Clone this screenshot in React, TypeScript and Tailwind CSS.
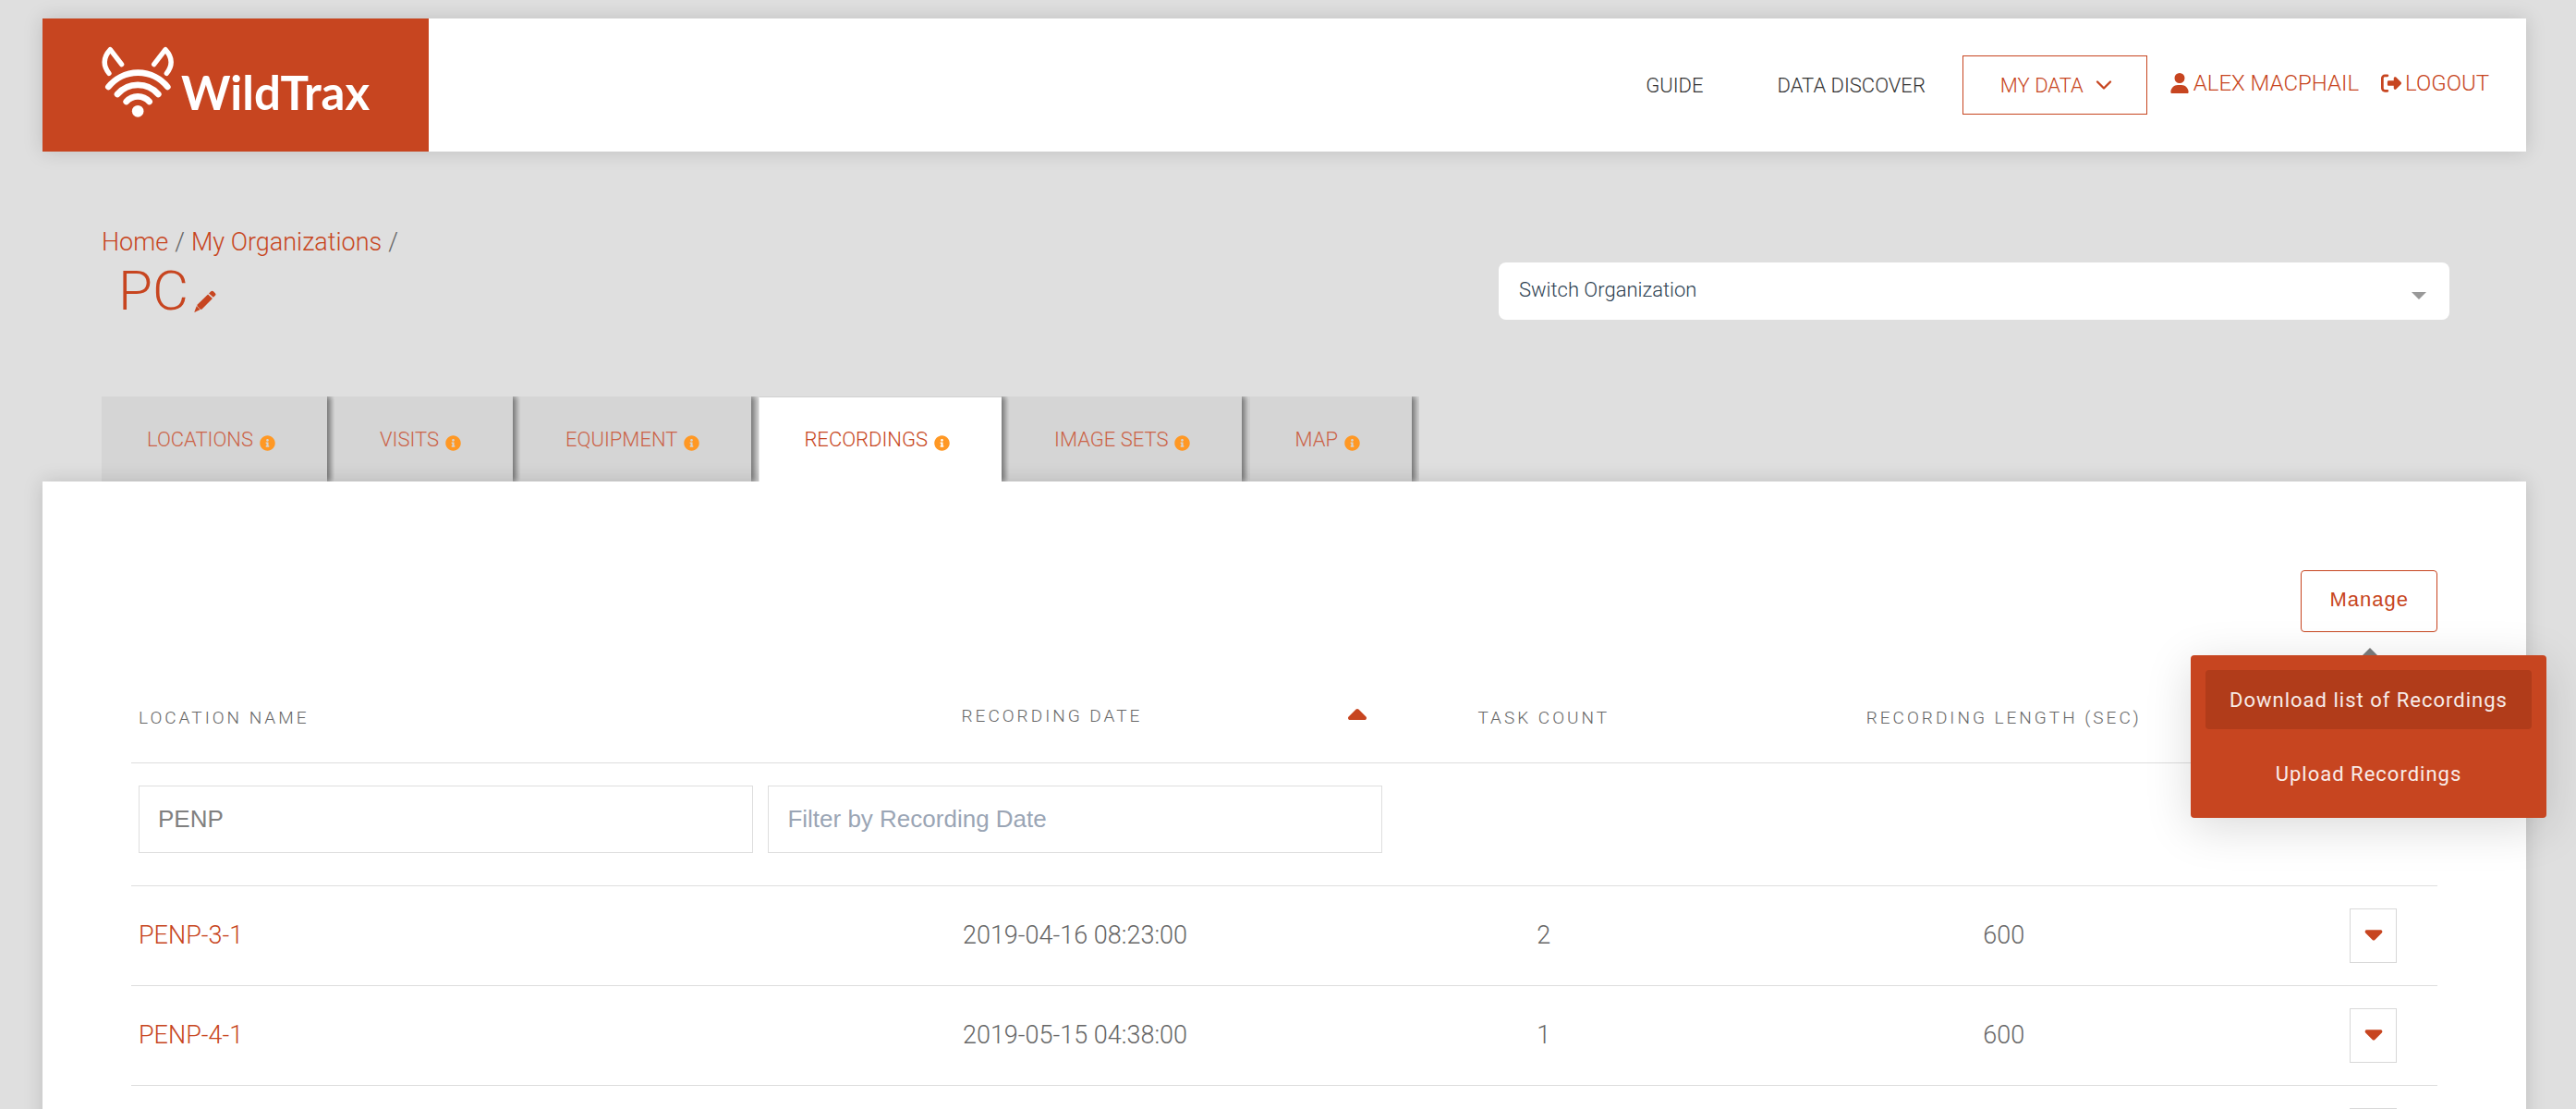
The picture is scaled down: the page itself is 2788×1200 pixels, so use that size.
import { useState } from "react";
import type { ReactNode } from "react";
import { FaUser, FaCaretUp, FaCaretDown, FaRightFromBracket } from "react-icons/fa6";
import { FaInfoCircle } from "react-icons/fa";
import { ChevronDown } from "lucide-react";

const tabs = ["LOCATIONS", "VISITS", "EQUIPMENT", "RECORDINGS", "IMAGE SETS", "MAP"];

const rows = [
  { name: "PENP-3-1", date: "2019-04-16 08:23:00", tasks: "2", length: "600" },
  { name: "PENP-4-1", date: "2019-05-15 04:38:00", tasks: "1", length: "600" },
  { name: "", date: "", tasks: "", length: "" },
];

function Logo() {
  return (
    <a href="#" aria-label="WildTrax" className="flex w-[418px] items-start bg-[#c74520] pt-[30px] pl-16 text-white">
      <svg viewBox="240 150 234 234" className="h-[78px] w-[78px] shrink-0" fill="none" stroke="currentColor" strokeLinecap="round" strokeLinejoin="round">
        <path d="M264 238C242 210 246 185 268 161L305 209" strokeWidth="16" />
        <path d="M451 238C473 210 469 185 447 161L410 209" strokeWidth="16" />
        <path d="M262 282A123 123 0 0 1 454 282" strokeWidth="20" />
        <path d="M291 306A88 88 0 0 1 424 306" strokeWidth="20" />
        <path d="M320 330A50 50 0 0 1 395 330" strokeWidth="20" />
        <circle cx="357.500" cy="361" r="19" fill="currentColor" stroke="none" />
      </svg>
      <span className="mt-5 ml-2 font-['Lato',sans-serif] text-[51px] leading-[60px] font-bold">WildTrax</span>
    </a>
  );
}

function Header() {
  return (
    <header className="flex h-36 bg-white shadow-[0_0_20px_rgba(0,0,0,0.15)]">
      <Logo />
      <nav className="ml-auto flex items-center pr-10 text-[22px] text-[#333]">
        <a href="#">GUIDE</a>
        <a href="#" className="ml-20">DATA DISCOVER</a>
        <button type="button" className="ml-10 flex h-16 items-center gap-2 border border-[#c74520] pr-8 pl-10 text-[#c74520]">
          MY DATA <ChevronDown className="size-7" strokeWidth={2} />
        </button>
        <a href="#" className="ml-6 flex items-center gap-1 pb-1 text-2xl text-[#c74520]">
          <FaUser className="size-[22px]" /> ALEX MACPHAIL
        </a>
        <a href="#" className="ml-6 flex items-center gap-1 pb-1 text-2xl text-[#c74520]">
          <FaRightFromBracket className="size-[22px]" /> LOGOUT
        </a>
      </nav>
    </header>
  );
}

function PencilIcon() {
  return (
    <svg viewBox="360 250 73 74" className="mb-3 size-6 text-[#c74520]" fill="currentColor">
      <path d="M409 261L416 254Q420 250 424 254L430 260Q434 264 430 268L424 274Z" />
      <path d="M406 264L421 278L386 313Q383 315 380 313L371 304Q369 301 371 298Z" />
      <path d="M368 303L380 315L360 324Z" />
    </svg>
  );
}

function Tab({ label, active, onSelect }: { label: string; active: boolean; onSelect: () => void }) {
  return (
    <button
      type="button"
      role="tab"
      aria-selected={active}
      onClick={onSelect}
      className={
        active
          ? "relative z-20 flex h-[92px] items-center gap-[7px] border-t border-[#d0d0d0] bg-white pr-14 pl-[49px] text-[#c74520] shadow-[3px_0_7px_1px_rgba(0,0,0,0.5)] [clip-path:inset(0_-8px_0_0)]"
          : "flex h-[92px] items-center gap-[7px] bg-[#d5d5d5] pr-14 pl-[49px] text-[#cb6347] shadow-[3px_0_7px_1px_rgba(0,0,0,0.5)] [clip-path:inset(0_-8px_0_0)]"
      }
    >
      {label}
      <FaInfoCircle className="mt-2 size-[17px] text-[#ff9824]" />
    </button>
  );
}

function Th({ children }: { children?: ReactNode }) {
  return <th className="h-24 px-2 text-center text-[19px] font-light tracking-[3px]">{children}</th>;
}

function ManageMenu() {
  return (
    <div className="relative flex justify-end">
      <button type="button" aria-haspopup="menu" className="h-[67px] rounded-[4px] border border-[#c74520] px-[30px] pb-1 font-['Liberation_Sans',sans-serif] text-[22px] font-normal tracking-[1px] text-[#c74520]">
        Manage
      </button>
      <div className="absolute top-[84px] right-[65px] z-10 h-2 w-4 bg-[#777] [clip-path:polygon(50%_0,100%_100%,0_100%)]" />
      <div role="menu" className="absolute top-[92px] right-[-118px] flex w-[385px] flex-col gap-4 rounded-[4px] bg-[#c74520] p-4 text-[22px] font-normal tracking-[1px] text-white/90 shadow-[0_10px_50px_rgba(0,0,0,0.15)]">
        <button type="button" role="menuitem" className="h-16 rounded-[4px] bg-[#b13c1a]">Download list of Recordings</button>
        <button type="button" role="menuitem" className="h-16 rounded-[4px]">Upload Recordings</button>
      </div>
    </div>
  );
}

function RecordingsTable() {
  const [location, setLocation] = useState("PENP");
  const input =
    "h-[73px] w-full border border-[#dedede] bg-white px-5 font-['Liberation_Sans',sans-serif] text-[26px] text-[#808080] placeholder:text-[#9aa5b5] outline-none";
  return (
    <table className="mt-[45px] w-full table-fixed border-collapse text-[#666]">
      <colgroup>
        <col className="w-[27.300%]" />
        <col className="w-[27.250%]" />
        <col className="w-[13.400%]" />
        <col className="w-[26.500%]" />
        <col />
      </colgroup>
      <thead>
        <tr className="border-b border-[#dedede]">
          <th className="h-24 px-2 text-left text-[19px] font-light tracking-[3px]">LOCATION NAME</th>
          <th className="h-24 text-[19px] font-light tracking-[3px]" aria-sort="ascending">
            <div className="flex items-center pr-5 pb-1">
              <span className="flex-1">RECORDING DATE</span>
              <FaCaretUp className="h-8 w-[30px] text-[#c74520]" />
            </div>
          </th>
          <Th>TASK COUNT</Th>
          <Th>RECORDING LENGTH (SEC)</Th>
          <Th />
        </tr>
      </thead>
      <tbody className="text-[27px]">
        <tr className="border-b border-[#dedede]">
          <td className="px-2 pt-6 pb-[35px]">
            <input aria-label="Filter by Location Name" className={input} value={location} onChange={(e) => setLocation(e.target.value)} />
          </td>
          <td className="px-2 pt-6 pb-[35px]">
            <input aria-label="Filter by Recording Date" className={input} placeholder="Filter by Recording Date" />
          </td>
          <td />
          <td />
          <td />
        </tr>
        {rows.map((r, i) => (
          <tr key={i} className="border-b border-[#dedede] text-center">
            <td className="px-2 text-left">
              <a href="#" className="text-[#c74520]">{r.name}</a>
            </td>
            <td>{r.date}</td>
            <td>{r.tasks}</td>
            <td>{r.length}</td>
            <td className="py-6">
              <button type="button" aria-label="Row actions" className="mx-auto flex h-[59px] w-[51px] items-center justify-center border border-[#d8d8d8] pb-1">
                <FaCaretDown className="size-[30px] text-[#c74520]" />
              </button>
            </td>
          </tr>
        ))}
      </tbody>
    </table>
  );
}

export default function App() {
  const [tab, setTab] = useState("RECORDINGS");
  return (
    <div className="h-screen overflow-hidden bg-[#dfdfdf] pt-5 pr-[54px] pl-[46px] font-['Roboto',sans-serif] font-light">
      <Header />
      <div className="mt-[78px] flex justify-between pr-[83px] pl-16">
        <div>
          <div className="flex gap-[7px] text-[27px] leading-10 text-[#666]">
            <a href="#" className="text-[#c74520]">Home</a>
            <span>/</span>
            <a href="#" className="text-[#c74520]">My Organizations</a>
            <span>/</span>
          </div>
          <div className="flex h-[70px] items-end gap-[6px] pb-[2px] pl-[18px]">
            <h1 className="text-[60px] leading-[70px] text-[#c74520]">PC</h1>
            <button type="button" aria-label="Edit name"><PencilIcon /></button>
          </div>
        </div>
        <div className="relative mt-[42px] h-[62px] w-[40.5%]">
          <select aria-label="Switch Organization" className="h-full w-full appearance-none rounded-lg bg-white px-[22px] pb-1 text-[22px] text-[#2c3e50]">
            <option>Switch Organization</option>
          </select>
          <span className="pointer-events-none absolute top-8 right-[25px] h-2 w-4 bg-[#999] [clip-path:polygon(0_0,100%_0,50%_100%)]" />
        </div>
      </div>
      <div role="tablist" className="mt-[77px] flex gap-2 pl-16 text-[22px]">
        {tabs.map((t) => (
          <Tab key={t} label={t} active={t === tab} onSelect={() => setTab(t)} />
        ))}
      </div>
      <main className="relative z-10 bg-white px-24 pt-24 shadow-[0_0_20px_rgba(0,0,0,0.15)]">
        <ManageMenu />
        <RecordingsTable />
      </main>
    </div>
  );
}
